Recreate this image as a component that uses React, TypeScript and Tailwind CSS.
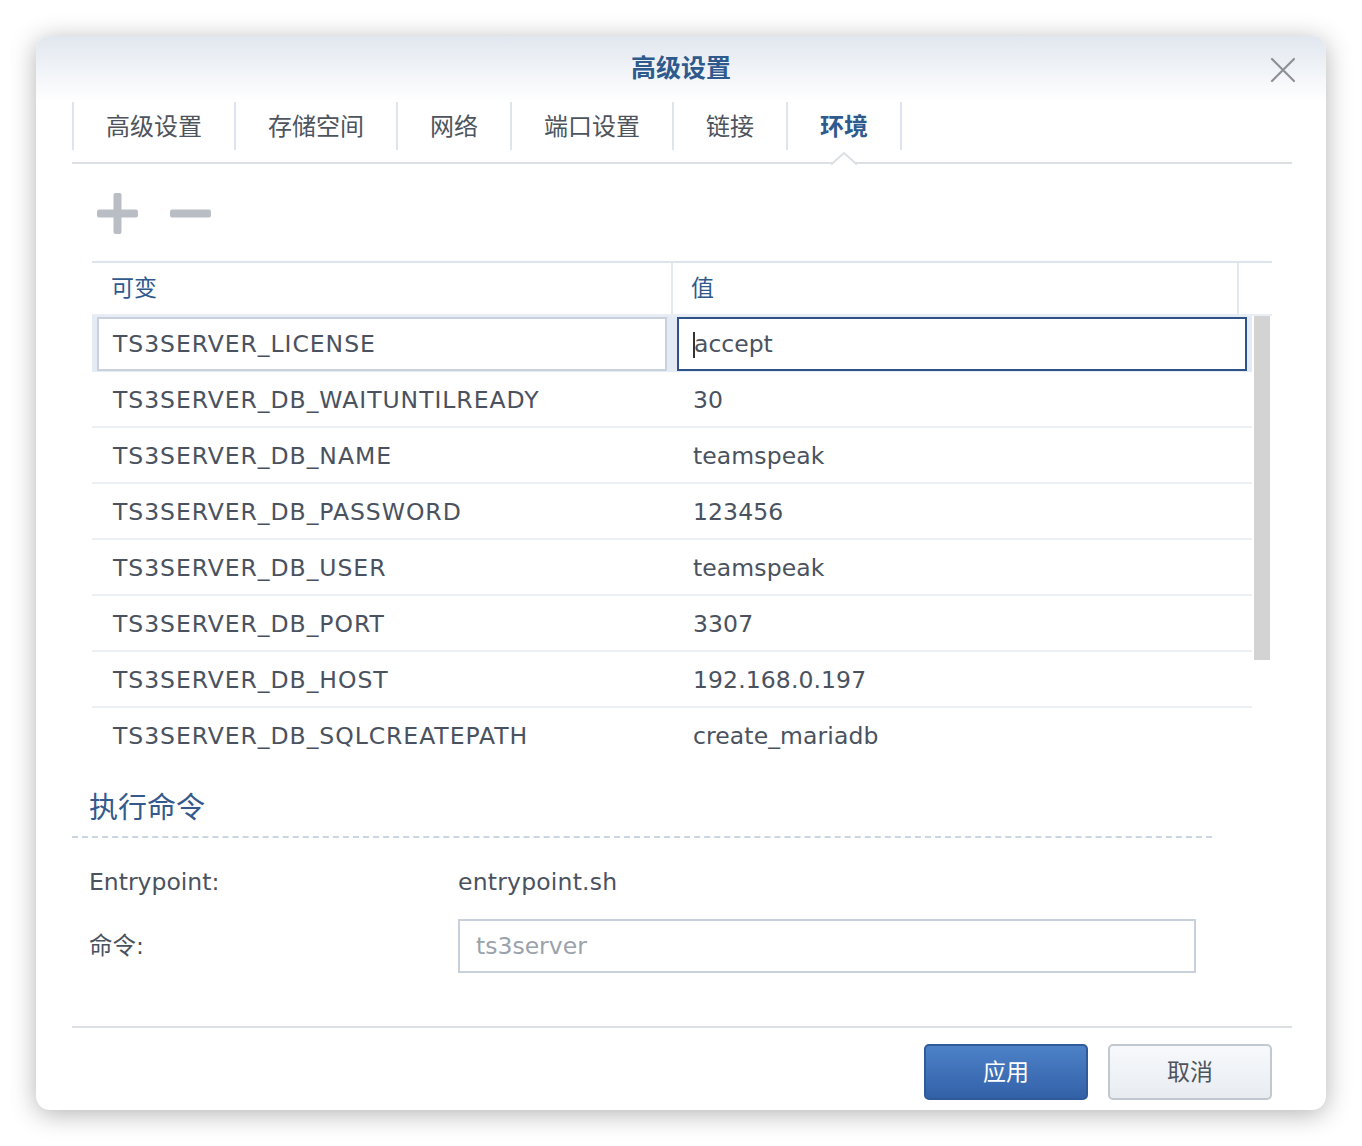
import { useState } from "react";

const rows = [
  { key: "TS3SERVER_LICENSE", value: "accept" },
  { key: "TS3SERVER_DB_WAITUNTILREADY", value: "30" },
  { key: "TS3SERVER_DB_NAME", value: "teamspeak" },
  { key: "TS3SERVER_DB_PASSWORD", value: "123456" },
  { key: "TS3SERVER_DB_USER", value: "teamspeak" },
  { key: "TS3SERVER_DB_PORT", value: "3307" },
  { key: "TS3SERVER_DB_HOST", value: "192.168.0.197" },
  { key: "TS3SERVER_DB_SQLCREATEPATH", value: "create_mariadb" },
];

const tabs = ["高级设置", "存储空间", "网络", "端口设置", "链接", "环境"];

const font = { fontFamily: '"DejaVu Sans", "Noto Sans CJK SC", sans-serif' };

function Notch() {
  return (
    <svg width="26" height="14" viewBox="0 0 26 14" className="absolute left-1/2 -translate-x-1/2 -bottom-[2px]">
      <polygon points="0,14 13,1 26,14" fill="#ffffff" />
      <polyline points="0,12.5 13,1 26,12.5" fill="none" stroke="#dcdfe3" strokeWidth="2" />
    </svg>
  );
}

export default function App() {
  const [active] = useState(5);

  return (
    <div className="w-[1362px] h-[1146px] bg-white p-[36px]" style={font}>
      <div className="w-full h-full rounded-[14px] bg-white shadow-[0_4px_26px_rgba(0,0,0,0.3)] flex flex-col overflow-hidden">
        {/* Title bar */}
        <div className="relative h-[66px] shrink-0 flex items-center justify-center bg-gradient-to-b from-[#e1e7ef] to-white">
          <span className="text-[25px] font-bold text-[#2f5a8e]">高级设置</span>
          <svg className="absolute right-[30px] top-[21px]" width="26" height="26" viewBox="0 0 26 26">
            <path d="M2 2 L24 24 M24 2 L2 24" stroke="#8d9197" strokeWidth="2.2" strokeLinecap="round" />
          </svg>
        </div>

        {/* Tabs */}
        <div className="ml-[36px] mr-[34px] h-[62px] shrink-0 border-b-2 border-[#dcdfe3] flex items-start">
          <div className="flex h-[48px] border-l-2 border-[#dde4ec]">
            {tabs.map((t, i) => (
              <div
                key={t}
                className={
                  "relative h-full px-[32px] pt-[2px] flex items-center border-r-2 border-[#dde4ec] text-[24px] " +
                  (i === active ? "font-bold text-[#2f5a8e]" : "text-[#4d545d]")
                }
              >
                {t}
                {i === active && (
                  <div className="absolute left-0 right-0 -bottom-[14px] h-[14px]">
                    <Notch />
                  </div>
                )}
              </div>
            ))}
          </div>
        </div>

        <div className="flex-1 ml-[36px] mr-[34px] flex flex-col">
          {/* Toolbar */}
          <div className="h-[97px] shrink-0 pl-[25px] pt-[29px] flex items-start gap-[32px]">
            <svg width="41" height="41" viewBox="0 0 41 41">
              <rect x="16.5" y="0" width="8" height="41" rx="2" fill="#b9bec5" />
              <rect x="0" y="16.5" width="41" height="8" rx="2" fill="#b9bec5" />
            </svg>
            <svg width="41" height="41" viewBox="0 0 41 41">
              <rect x="0" y="16.5" width="41" height="8" rx="2" fill="#b9bec5" />
            </svg>
          </div>

          {/* Table */}
          <div className="mx-[20px] shrink-0">
            <div className="h-[55px] border-t-2 border-b-2 border-t-[#dde4ec] border-b-[#e9eef4] flex text-[23px] text-[#2f5a8e]">
              <div className="w-[581px] pl-[19px] flex items-center border-r-2 border-[#e3e9f0]">可变</div>
              <div className="w-[566px] pl-[18px] flex items-center border-r-2 border-[#e3e9f0]">值</div>
              <div className="flex-1" />
            </div>
            <div className="flex h-[448px] overflow-hidden">
              <div className="w-[1160px]">
                {rows.map((r, i) =>
                  i === 0 ? (
                    <div key={r.key} className="h-[56px] bg-[#e4ebf4] flex items-center text-[23.5px] text-[#4a5260]">
                      <div className="w-[581px] h-full pl-[5px] pr-[6px] py-[1px]">
                        <div className="h-full bg-white border-2 border-[#c9d1dc] flex items-center pl-[14px] pt-[2px] tracking-[0.95px]">{r.key}</div>
                      </div>
                      <div className="w-[579px] h-full pl-[4px] pr-[5px] py-[1px]">
                        <div className="h-full bg-white border-2 border-[#2f5289] flex items-center pl-[14px] pt-[2px]">
                          <span className="w-[2px] h-[26px] bg-[#333] mr-[-1px]" />
                          {r.value}
                        </div>
                      </div>
                    </div>
                  ) : (
                    <div
                      key={r.key}
                      className={
                        "h-[56px] flex items-center pt-[3px] border-b-2 text-[23.5px] text-[#4a5260] " +
                        (i < rows.length - 1 ? "border-[#eceff3]" : "border-transparent")
                      }
                    >
                      <div className="w-[581px] pl-[21px] tracking-[0.95px]">{r.key}</div>
                      <div className="flex-1 pl-[20px] tracking-[0.1px]">{r.value}</div>
                    </div>
                  )
                )}
              </div>
              <div className="ml-[2px] w-[16px] h-[344px] bg-[#d3d3d3]" />
            </div>
          </div>

          {/* Command section */}
          <div className="w-[1140px] pt-[26px] pb-[10px] pl-[17px] border-b-2 border-dashed border-[#ccd6e2]">
            <div className="text-[29px] leading-[36px] text-[#34598c]">执行命令</div>
          </div>
          <div className="pl-[17px] mt-[18px] text-[23.5px] text-[#4a5260]">
            <div className="h-[52px] flex items-center pt-[2px]">
              <div className="w-[369px]">Entrypoint:</div>
              <div className="tracking-[0.2px]">entrypoint.sh</div>
            </div>
            <div className="mt-[11px] flex items-center">
              <div className="w-[369px] pt-[2px]">命令:</div>
              <div className="w-[738px] h-[54px] border-2 border-[#c8d0da] flex items-center pl-[16px] pt-[2px] text-[#9aa2ac]">ts3server</div>
            </div>
          </div>
        </div>

        {/* Footer */}
        <div className="ml-[36px] mr-[34px] h-[84px] shrink-0 border-t-2 border-[#dcdfe3] pt-[16px] pr-[20px] flex justify-end gap-[20px]">
          <button className="w-[164px] h-[56px] rounded-[5px] border-2 border-[#2f5b9b] bg-gradient-to-b from-[#4d82c8] to-[#3361a8] text-white text-[23px]">
            应用
          </button>
          <button className="w-[164px] h-[56px] rounded-[5px] border-2 border-[#c2c8d0] bg-gradient-to-b from-[#f7f9fc] to-[#e8ecf1] text-[#4d545d] text-[23px]">
            取消
          </button>
        </div>
      </div>
    </div>
  );
}
